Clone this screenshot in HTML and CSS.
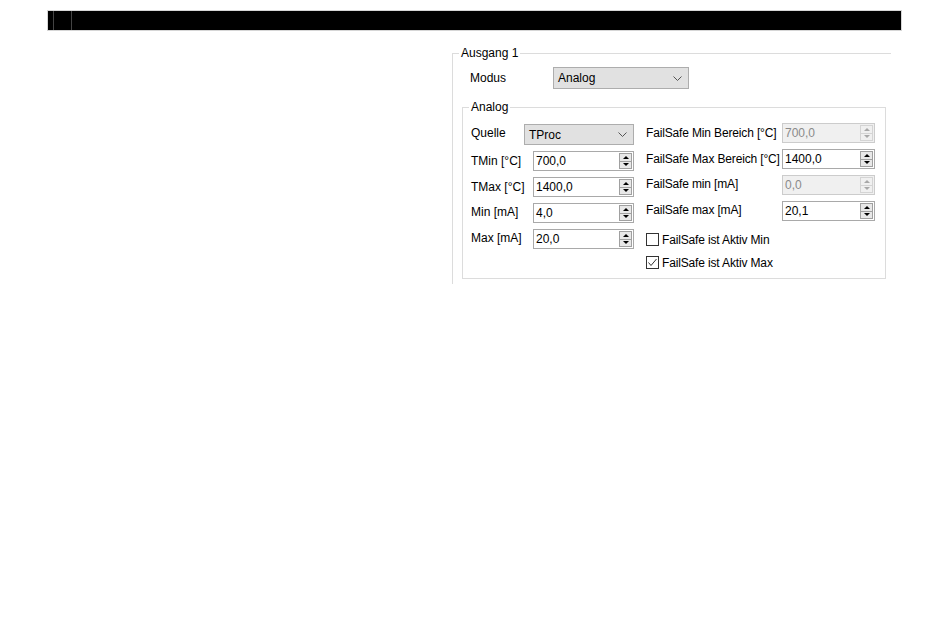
FILE: index.html
```html
<!DOCTYPE html>
<html lang="de">
<head>
  <meta charset="UTF-8" />
  <meta name="viewport" content="width=device-width, initial-scale=1.0" />
  <title>Ausgang 1</title>
  <link rel="stylesheet" href="styles.css">
</head>
<body>
  <div class="page">
    <div class="topbar">
      <div class="tab tab-a"></div>
      <div class="tab tab-b"></div>
    </div>

    <div class="workspace">
      <div class="left-pane"></div>

      <fieldset class="group group-outer">
        <legend>Ausgang 1</legend>

        <div class="modus-row">
          <span class="modus-label">Modus</span>
          <div class="combo combo-modus">
            <span>Analog</span>
            <svg class="chev" width="9" height="5" viewBox="0 0 9 5"><polyline points="0.5,0.5 4.5,4.5 8.5,0.5" fill="none" stroke="#555" stroke-width="1"/></svg>
          </div>
        </div>

        <fieldset class="group group-inner">
          <legend>Analog</legend>
          <div class="cols">
            <div class="col col-left">
              <div class="row row-combo">
                <span class="lbl">Quelle</span>
                <div class="combo combo-quelle">
                  <span>TProc</span>
                  <svg class="chev" width="9" height="5" viewBox="0 0 9 5"><polyline points="0.5,0.5 4.5,4.5 8.5,0.5" fill="none" stroke="#555" stroke-width="1"/></svg>
                </div>
              </div>
              <div class="row">
                <span class="lbl">TMin [°C]</span>
                <div class="num num-left"><span class="val">700,0</span><div class="spin"><i class="up"></i><i class="down"></i></div></div>
              </div>
              <div class="row">
                <span class="lbl">TMax [°C]</span>
                <div class="num num-left"><span class="val">1400,0</span><div class="spin"><i class="up"></i><i class="down"></i></div></div>
              </div>
              <div class="row">
                <span class="lbl lbl-up">Min [mA]</span>
                <div class="num num-left"><span class="val">4,0</span><div class="spin"><i class="up"></i><i class="down"></i></div></div>
              </div>
              <div class="row">
                <span class="lbl lbl-up">Max [mA]</span>
                <div class="num num-left"><span class="val">20,0</span><div class="spin"><i class="up"></i><i class="down"></i></div></div>
              </div>
            </div>

            <div class="col col-right">
              <div class="row">
                <span class="lbl">FailSafe Min Bereich [°C]</span>
                <div class="num num-right disabled"><span class="val">700,0</span><div class="spin"><i class="up"></i><i class="down"></i></div></div>
              </div>
              <div class="row">
                <span class="lbl">FailSafe Max Bereich [°C]</span>
                <div class="num num-right"><span class="val">1400,0</span><div class="spin"><i class="up"></i><i class="down"></i></div></div>
              </div>
              <div class="row">
                <span class="lbl lbl-up">FailSafe min [mA]</span>
                <div class="num num-right disabled"><span class="val">0,0</span><div class="spin"><i class="up"></i><i class="down"></i></div></div>
              </div>
              <div class="row">
                <span class="lbl lbl-up">FailSafe max [mA]</span>
                <div class="num num-right"><span class="val">20,1</span><div class="spin"><i class="up"></i><i class="down"></i></div></div>
              </div>

              <div class="check check-first">
                <span class="box"></span>
                <span class="lbl">FailSafe ist Aktiv Min</span>
              </div>
              <div class="check">
                <span class="box">
                  <svg width="11" height="11" viewBox="0 0 11 11"><polyline points="1.5,5.5 4,8.5 9.5,2" fill="none" stroke="#333" stroke-width="1"/></svg>
                </span>
                <span class="lbl">FailSafe ist Aktiv Max</span>
              </div>
            </div>
          </div>
        </fieldset>
      </fieldset>
    </div>
  </div>
</body>
</html>
```

FILE: styles.css
```css
body {
  margin: 0;
  font-family: 'Liberation Sans', Arial, sans-serif;
  font-size: 12px;
  color: #000;
  background: #fff;
}
.page {
  padding: 10px 0 0 47px;
}
.topbar {
  width: 855px;
  height: 21px;
  box-sizing: border-box;
  border: 1px solid #d6d6d6;
  background: #000;
  display: flex;
}
.tab {
  height: 100%;
  border-right: 1px solid #444;
}
.tab-a {
  width: 5px;
}
.tab-b {
  width: 17px;
}
.workspace {
  display: flex;
  margin-top: 15px;
}
.left-pane {
  width: 405px;
  flex: none;
}

/* group boxes */
.group {
  margin: 0;
  padding: 0;
  box-sizing: border-box;
  border: 1px solid #dcdcdc;
}
.group legend {
  margin-left: 6px;
  padding: 0 2px;
  line-height: 14px;
}
.group-outer {
  width: 439px;
  height: 238px;
  border-right: none;
  border-bottom: none;
}
.group-inner {
  width: 424px;
  height: 179px;
  margin: 11px 0 0 9px;
  padding: 9px 0 0 0;
}

.modus-row {
  display: flex;
  align-items: center;
  margin-top: 7px;
  padding-left: 17px;
}
.modus-label {
  width: 83px;
}

/* combo boxes */
.combo {
  box-sizing: border-box;
  background: #e1e1e1;
  border: 1px solid #adadad;
  display: flex;
  align-items: center;
  justify-content: space-between;
  padding: 0 6px 0 4px;
  flex: none;
}
.combo-modus {
  width: 136px;
  height: 22px;
}
.combo-quelle {
  width: 110px;
  height: 21px;
}
.chev {
  display: block;
}

/* columns */
.cols {
  display: flex;
  gap: 12px;
  margin-left: 8px;
}
.col {
  display: flex;
  flex-direction: column;
  gap: 6px;
}
.col-left {
  width: 163px;
  margin-top: 1px;
}
.col-right {
  width: 229px;
}
.col-right .lbl {
  letter-spacing: -0.15px;
}
.row {
  display: flex;
  align-items: center;
  justify-content: space-between;
  height: 20px;
}
.row-combo {
  height: 21px;
}
.lbl {
  white-space: nowrap;
}
.lbl-up {
  margin-top: -3px;
}
.row-combo .lbl {
  margin-top: -3px;
}

/* numeric up/down */
.num {
  box-sizing: border-box;
  height: 20px;
  border: 1px solid #a9a9a9;
  background: #fff;
  display: flex;
  align-items: center;
  padding: 1px 1px 1px 2px;
  flex: none;
}
.num-left {
  width: 101px;
}
.num-right {
  width: 93px;
}
.val {
  flex: 1;
}
.spin {
  width: 13px;
  height: 16px;
  box-sizing: border-box;
  border: 1px solid #a0a0a0;
  background: #e8e8e8;
  display: flex;
  flex-direction: column;
}
.spin i {
  flex: 1;
  display: flex;
  align-items: center;
  justify-content: center;
}
.spin .up {
  border-bottom: 1px solid #a0a0a0;
}
.spin .up::before {
  content: '';
  border-left: 3px solid transparent;
  border-right: 3px solid transparent;
  border-bottom: 3px solid #000;
}
.spin .down::before {
  content: '';
  border-left: 3px solid transparent;
  border-right: 3px solid transparent;
  border-top: 3px solid #000;
}
.num.disabled {
  background: #f0f0f0;
  border-color: #cccccc;
  color: #8a8a8a;
}
.num.disabled .spin {
  border-color: #d4d4d4;
  background: #f0f0f0;
}
.num.disabled .spin .up {
  border-bottom-color: #d4d4d4;
}
.num.disabled .spin .up::before {
  border-bottom-color: #a8a8a8;
}
.num.disabled .spin .down::before {
  border-top-color: #a8a8a8;
}

/* checkboxes */
.check {
  display: flex;
  align-items: center;
  gap: 3px;
  height: 13px;
  margin-top: 4px;
}
.check-first {
  margin-top: 6px;
}
.box {
  width: 13px;
  height: 13px;
  box-sizing: border-box;
  border: 1px solid #333;
  background: #fff;
  display: flex;
  align-items: center;
  justify-content: center;
}
.box svg {
  display: block;
}
```
